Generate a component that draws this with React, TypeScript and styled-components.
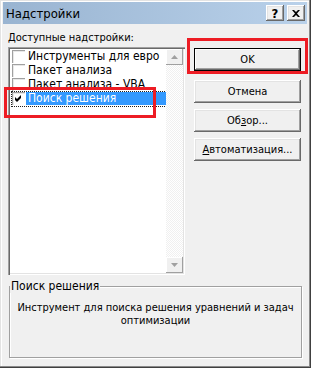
import styled, { createGlobalStyle } from 'styled-components';

const GlobalStyle = createGlobalStyle`
  html, body {
    margin: 0;
    padding: 0;
    background: #ffffff;
  }
  body {
    font-family: "DejaVu Sans Condensed", "DejaVu Sans", sans-serif;
    font-stretch: condensed;
    font-size: 11px;
    color: #000000;
  }
`;

const Window = styled.div`
  position: relative;
  width: 311px;
  height: 368px;
  box-sizing: border-box;
  padding: 2px 4px 4px 3px;
  display: flex;
  flex-direction: column;
  background-color: #f0f0f0;
  box-shadow: inset -1px -1px 0 #404040, inset -2px -2px 0 #8a8a8a,
    inset 1px 1px 0 #e3e3e3, inset 2px 2px 0 #ffffff;
`;

const TitleBar = styled.div`
  height: 22px;
  min-height: 22px;
  padding: 0 2px 0 3px;
  display: flex;
  flex-direction: row;
  align-items: center;
  gap: 3px;
  background: linear-gradient(to right, #99b4d1, #b9d1ea);
`;

const TitleText = styled.div`
  flex: 1;
  font-size: 13px;
  line-height: 15px;
`;

const CaptionButton = styled.div`
  width: 18px;
  height: 16px;
  box-sizing: border-box;
  display: flex;
  align-items: center;
  justify-content: center;
  background-color: #f0f0f0;
  font-family: "DejaVu Sans", sans-serif;
  font-size: 13px;
  font-weight: 700;
  box-shadow: inset -1px -1px 0 #696969, inset 1px 1px 0 #ffffff,
    inset -2px -2px 0 #a0a0a0, inset 2px 2px 0 #e3e3e3;
`;

const Body = styled.div`
  flex: 1;
  display: flex;
  flex-direction: column;
  padding: 7px 0 0 5px;
`;

const TopRow = styled.div`
  display: flex;
  flex-direction: row;
`;

const LeftColumn = styled.div`
  width: 177px;
  display: flex;
  flex-direction: column;
`;

const FieldLabel = styled.div`
  height: 13px;
  line-height: 13px;
  margin-bottom: 3px;
`;

const ListBox = styled.div`
  height: 228px;
  box-sizing: border-box;
  padding: 2px;
  display: flex;
  flex-direction: row;
  background-color: #ffffff;
  box-shadow: inset 1px 1px 0 #a0a0a0, inset 2px 2px 0 #696969,
    inset -1px -1px 0 #ffffff, inset -2px -2px 0 #e3e3e3;
`;

const ListItems = styled.div`
  flex: 1;
  padding: 1px 0 0 2px;
  display: flex;
  flex-direction: column;
`;

const ListRow = styled.div<{ $focused?: boolean }>`
  height: 14px;
  display: flex;
  flex-direction: row;
  align-items: flex-start;
  font-size: 12px;
  outline: ${(p) => (p.$focused ? '1px dotted #202020' : 'none')};
`;

const CheckBox = styled.div`
  width: 13px;
  height: 13px;
  min-width: 13px;
  box-sizing: border-box;
  background-color: #ffffff;
  box-shadow: inset 1px 1px 0 #a0a0a0, inset 2px 2px 0 #e8e8e8;
`;

const ItemText = styled.div<{ $selected?: boolean }>`
  flex: 1;
  height: 13px;
  margin-left: 1px;
  padding-left: 2px;
  line-height: 13px;
  white-space: nowrap;
  overflow: hidden;
  color: ${(p) => (p.$selected ? '#ffffff' : '#000000')};
  background-color: ${(p) => (p.$selected ? '#3399ff' : 'transparent')};
`;

const ScrollBar = styled.div`
  width: 17px;
  display: flex;
  flex-direction: column;
  justify-content: space-between;
  background: repeating-conic-gradient(#f0f0f0 0 25%, #ffffff 0 50%) 0 0 / 2px 2px;
`;

const ScrollArrow = styled.div`
  height: 16px;
  display: flex;
  align-items: center;
  justify-content: center;
  background-color: #f0f0f0;
  box-shadow: inset -1px -1px 0 #a0a0a0, inset 1px 1px 0 #ffffff;
`;

const RightColumn = styled.div`
  width: 107px;
  margin-left: 9px;
  padding-top: 17px;
  display: flex;
  flex-direction: column;
  gap: 6px;
`;

const PushButton = styled.div<{ $default?: boolean }>`
  height: 23px;
  box-sizing: border-box;
  display: flex;
  align-items: center;
  justify-content: center;
  background-color: #f0f0f0;
  margin-bottom: ${(p) => (p.$default ? '3px' : '0')};
  box-shadow: ${(p) =>
    p.$default
      ? 'inset 0 0 0 1px #000000, inset -2px -2px 0 #696969, inset 2px 2px 0 #ffffff, inset -3px -3px 0 #a0a0a0'
      : 'inset -1px -1px 0 #696969, inset 1px 1px 0 #ffffff, inset -2px -2px 0 #a0a0a0, inset 2px 2px 0 #e3e3e3'};
`;

const Group = styled.fieldset`
  width: 293px;
  height: 78px;
  box-sizing: border-box;
  margin: 5px 0 0 1px;
  padding: 0;
  border: 1px solid #a0a0a0;
  box-shadow: inset 1px 1px 0 #ffffff, 1px 1px 0 #ffffff;
`;

const GroupLegend = styled.legend`
  padding: 0 1px;
  margin-left: 0;
  font-size: 12px;
  line-height: 13px;
  background-color: #f0f0f0;
`;

const Description = styled.div`
  padding-top: 8px;
  text-align: center;
  line-height: 13px;
`;

const Mark = styled.div<{ $x: number; $y: number; $w: number; $h: number }>`
  position: absolute;
  left: ${(p) => p.$x}px;
  top: ${(p) => p.$y}px;
  width: ${(p) => p.$w}px;
  height: ${(p) => p.$h}px;
  box-sizing: border-box;
  border: 3px solid #ed1c24;
  pointer-events: none;
`;

const CheckMark = () => (
  <svg width="13" height="13" viewBox="0 0 13 13">
    <path d="M3 5 L5 7 L9 3 L9 6 L5 10 L3 8 Z" fill="#000000" />
  </svg>
);

const Arrow = ({ down }: { down?: boolean }) => (
  <svg width="7" height="4" viewBox="0 0 7 4">
    <path d={down ? 'M0 0 H7 L3.5 4 Z' : 'M0 4 H7 L3.5 0 Z'} fill="#a0a0a0" />
  </svg>
);

const CloseGlyph = () => (
  <svg width="8" height="7" viewBox="0 0 8 7">
    <path
      d="M0 0 H2 L4 2 L6 0 H8 L5 3.5 L8 7 H6 L4 5 L2 7 H0 L3 3.5 Z"
      fill="#000000"
    />
  </svg>
);

const addIns = [
  { name: 'Инструменты для евро', checked: false },
  { name: 'Пакет анализа', checked: false },
  { name: 'Пакет анализа - VBA', checked: false },
  { name: 'Поиск решения', checked: true },
];

const App = () => {
  return (
    <>
      <GlobalStyle />
      <Window>
        <TitleBar>
          <TitleText>Надстройки</TitleText>
          <CaptionButton>?</CaptionButton>
          <CaptionButton>
            <CloseGlyph />
          </CaptionButton>
        </TitleBar>
        <Body>
          <TopRow>
            <LeftColumn>
              <FieldLabel>
                <u>Д</u>оступные надстройки:
              </FieldLabel>
              <ListBox>
                <ListItems>
                  {addIns.map((item, i) => {
                    const selected = i === addIns.length - 1;
                    return (
                      <ListRow key={item.name} $focused={selected}>
                        <CheckBox>{item.checked && <CheckMark />}</CheckBox>
                        <ItemText $selected={selected}>{item.name}</ItemText>
                      </ListRow>
                    );
                  })}
                </ListItems>
                <ScrollBar>
                  <ScrollArrow>
                    <Arrow />
                  </ScrollArrow>
                  <ScrollArrow>
                    <Arrow down />
                  </ScrollArrow>
                </ScrollBar>
              </ListBox>
            </LeftColumn>
            <RightColumn>
              <PushButton $default>OK</PushButton>
              <PushButton>Отмена</PushButton>
              <PushButton>
                <span>
                  Об<u>з</u>ор...
                </span>
              </PushButton>
              <PushButton>
                <span>
                  <u>А</u>втоматизация...
                </span>
              </PushButton>
            </RightColumn>
          </TopRow>
          <Group>
            <GroupLegend>Поиск решения</GroupLegend>
            <Description>
              Инструмент для поиска решения уравнений и задач
              <br />
              оптимизации
            </Description>
          </Group>
        </Body>
        <Mark $x={4} $y={87} $w={152} $h={31} />
        <Mark $x={187} $y={38} $w={121} $h={36} />
      </Window>
    </>
  );
};

export default App;
